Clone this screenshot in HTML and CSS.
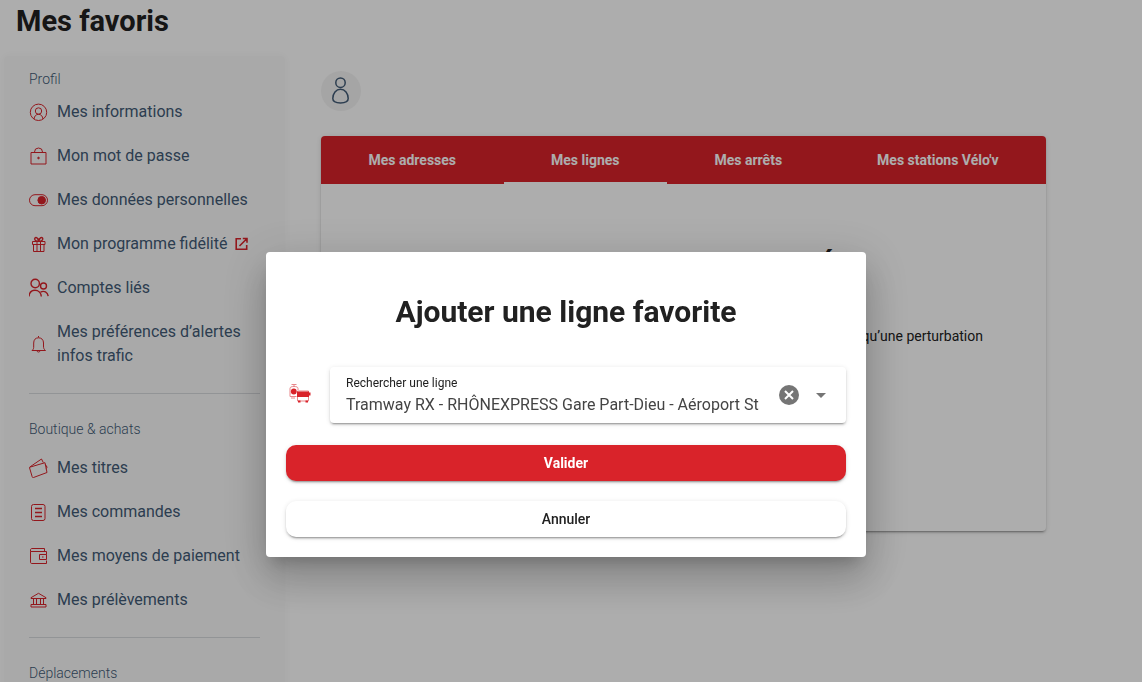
FILE: index.html
```html
<!DOCTYPE html>
<html lang="fr">
<head>
<meta charset="utf-8">
<title>Mes favoris</title>
<link rel="stylesheet" href="styles.css">
</head>
<body>
<div class="page">
  <h1 class="page-title">Mes favoris</h1>
  <div class="layout">
    <nav class="sidebar">
      <section class="group">
        <h2 class="group-label">Profil</h2>
        <a class="item" href="#"><svg class="icon" viewBox="0 0 20 20"><circle cx="9.500" cy="10.300" r="8.200"/><circle cx="9.500" cy="9" r="3.200"/><path d="M5 17c.4-2.900 2-4.700 4.500-4.700s4.100 1.800 4.500 4.700"/></svg><span>Mes informations</span></a>
        <a class="item" href="#"><svg class="icon" viewBox="0 0 20 20"><path d="M2 6.500h15v11.500h-15zM5.500 6.500V6a4 4 0 0 1 8 0v.5"/><circle class="solid" cx="9.500" cy="12" r=".8"/></svg><span>Mon mot de passe</span></a>
        <a class="item" href="#"><svg class="icon" viewBox="0 0 20 20"><rect x=".5" y="4.700" width="18" height="11" rx="5.500"/><circle class="solid" cx="12.700" cy="10.200" r="3.800"/></svg><span>Mes données personnelles</span></a>
        <a class="item" href="#"><svg class="icon" viewBox="0 0 20 20"><path d="M3.500 7.500h12.500v3H3.500zM4.500 10.500h10.500v7H4.500zM8 7.500v10M11.500 7.500v10"/><path class="strong" d="M9.700 7.200C6.500 7.200 4.800 5.500 6 4S9 4.200 9.700 7.200c.7-3 2.700-4.700 3.800-3.200s-.6 3.200-3.800 3.200M7.500 3.500l2.200 2 2.200-2"/></svg><span>Mon programme fidélité</span><svg class="icon icon-external" viewBox="0 0 14 14"><path d="M6 1.800H1.200v10.500h10.500V8M7.800 1.500h4.200v4.300M11.800 1.700 4.500 9"/></svg></a>
        <a class="item" href="#"><svg class="icon icon-strong" viewBox="0 0 20 20"><circle cx="6.200" cy="5.500" r="4.200"/><circle cx="14.500" cy="8" r="3"/><path d="M0 18.500c.3-3.700 2.700-6.200 6-6.200s6 2.500 6.300 6.200M11.500 14.200c3.500-2 7.200 0 7.700 4"/></svg><span>Comptes liés</span></a>
        <a class="item" href="#"><svg class="icon" viewBox="0 0 20 20"><path d="M9.500 2v1.500M3 16.500h13.500c-1.500-1.300-2-2-2-4.500V9c0-3.300-2-5.200-5-5.200S4.700 5.700 4.700 9v3c0 2.500-.2 3.200-1.700 4.500zM8 17c.3 1.400 2.700 1.400 3 0"/></svg><span>Mes préférences d’alertes infos trafic</span></a>
      </section>
      <section class="group">
        <h2 class="group-label">Boutique &amp; achats</h2>
        <a class="item" href="#"><svg class="icon" viewBox="0 0 20 20"><path d="M.8 9.200 16 4.700l2 9.800-13.500 5c-.7.200-1.100 0-1.300-.7L.6 10c-.2-.6 0-.9.500-1.200L12.500 1l1.800 3.600M16.300 6.400l1.900 3-1.400 1.200"/></svg><span>Mes titres</span></a>
        <a class="item" href="#"><svg class="icon" viewBox="0 0 20 20"><rect x="2.500" y="2.500" width="13.500" height="16" rx="2"/><path class="strong" d="M6 6.500h7M6 10.500h7M6 14.500h7"/></svg><span>Mes commandes</span></a>
        <a class="item" href="#"><svg class="icon" viewBox="0 0 20 20"><path d="M17.500 8.500v-3h-16v10.800c0 .7.500 1.200 1.200 1.200h14.800v-3M1.500 5.500v-1.500c0-.9.500-1.500 1.500-1.500h12.500v3M17.500 8.500h-7v5h7zM13 11h1.500"/></svg><span>Mes moyens de paiement</span></a>
        <a class="item" href="#"><svg class="icon" viewBox="0 0 20 20"><path d="M2 7.700 9.500 3.300l7.500 4.400v.8H2zM4.500 8.500v6M7.500 8.500v6M11.500 8.500v6M14.500 8.500v6M2 14.500h15v2.500H2z"/></svg><span>Mes prélèvements</span></a>
      </section>
      <section class="group">
        <h2 class="group-label">Déplacements</h2>
      </section>
    </nav>
    <main class="content">
      <div class="avatar"><svg class="avatar-icon" viewBox="0 0 20 28"><circle cx="9.500" cy="5.700" r="4.700"/><path d="M9.500 12.300c4.500 0 7.700 4.300 7.700 9.300 0 3.200-2.500 4.400-7.700 4.400s-7.700-1.200-7.700-4.400c0-5 3.200-9.300 7.700-9.300z"/></svg></div>
      <div class="card">
        <div class="tabs" role="tablist">
          <button class="tab" role="tab">Mes adresses</button>
          <button class="tab tab-active" role="tab" aria-selected="true">Mes lignes</button>
          <button class="tab" role="tab">Mes arrêts</button>
          <button class="tab" role="tab">Mes stations Vélo'v</button>
        </div>
        <div class="panel">
          <h2 class="panel-title">Mes lignes favorites en Été</h2>
          <p class="panel-text">Ajoutez vos lignes favorites pour être informé directement en temps réel dès qu’une perturbation</p>
        </div>
      </div>
    </main>
  </div>
</div>
<div class="overlay">
  <form class="dialog" role="dialog" aria-labelledby="dialog-title">
    <h2 class="dialog-title" id="dialog-title">Ajouter une ligne favorite</h2>
    <div class="search-row">
      <svg class="transport" viewBox="0 0 24 24"><path class="pale" d="M3.500 1.500h5M6 1.500v2M10 7V5.500C10 4 8.500 3.500 6 3.500S2 4 2 5.500v8h6.500M3 15h4M9.500 8h11v10h-11z"/><circle class="fill" cx="5.800" cy="8.500" r="2.900"/><path class="fill" d="M9 8.500h12V14H9zM21 9.500h1.500v3H21zM10 17.500h2.500v2H10zM17.500 17.500H20v2h-2.500z"/></svg>
      <div class="field">
        <div class="field-text">
          <label class="field-label" for="line">Rechercher une ligne</label>
          <input class="field-input" id="line" type="text" value="Tramway RX - RHÔNEXPRESS Gare Part-Dieu - Aéroport St">
        </div>
        <button class="field-button" type="button" aria-label="Effacer"><svg class="clear" viewBox="0 0 20 20"><circle cx="10" cy="10" r="10"/><path d="m6 6 8 8M14 6l-8 8"/></svg></button>
        <button class="field-button" type="button" aria-label="Ouvrir la liste"><svg class="arrow" viewBox="0 0 10 5"><path d="M0 0h10L5 5z"/></svg></button>
      </div>
    </div>
    <button class="action action-primary" type="button">Valider</button>
    <button class="action" type="button">Annuler</button>
  </form>
</div>
</body>
</html>
```

FILE: styles.css
```css
* {
  box-sizing: border-box;
}

body {
  margin: 0;
  background: #fff;
  color: #212121;
  font-family: Roboto, "Liberation Sans", sans-serif;
  font-size: 16px;
  line-height: 24px;
  height: 100vh;
  overflow: hidden;
}

h1, h2, p {
  margin: 0;
}

button {
  border: 0;
  background: none;
  font: inherit;
  color: inherit;
  padding: 0;
}

.page-title {
  padding: 0 16px;
  font-size: 29px;
  line-height: 42px;
  font-weight: 700;
}

.layout {
  display: flex;
  align-items: flex-start;
  gap: 36px;
  padding: 14px 96px 0 4px;
}

.sidebar {
  flex: 0 0 281px;
  padding: 13px 25px;
  background: #fafafa;
  border-radius: 4px;
  box-shadow: 0 0 8px rgba(0, 0, 0, .03);
  color: #425b76;
}

.group + .group {
  margin-top: 15px;
  padding-top: 25px;
  border-top: 1px solid #d8dade;
}

.group-label {
  font-size: 14px;
  line-height: 20px;
  font-weight: 300;
  margin-bottom: 7px;
}

.group:first-child .group-label {
  margin-bottom: 1px;
}

.item {
  display: flex;
  align-items: center;
  gap: 8px;
  padding: 10px 0;
  color: inherit;
  text-decoration: none;
}

.icon {
  flex: none;
  width: 20px;
  height: 20px;
  fill: none;
  stroke: #d9232a;
  stroke-width: 1;
}

.icon-strong {
  stroke-width: 1.4;
}

.icon .solid {
  fill: #d9232a;
}

.icon .strong {
  stroke-width: 1.4;
}

.icon-external {
  width: 14px;
  height: 14px;
  stroke-width: 1.6;
}

.content {
  flex: 1;
  padding-top: 15px;
}

.avatar {
  display: flex;
  align-items: center;
  justify-content: center;
  width: 40px;
  height: 40px;
  border-radius: 50%;
  background: #f4f4f4;
}

.avatar-icon {
  width: 20px;
  height: 28px;
  fill: none;
  stroke: #425b76;
  stroke-width: 1.5;
}

.card {
  margin-top: 25px;
  border-radius: 4px;
  box-shadow: 0 3px 1px -2px rgba(0, 0, 0, .2), 0 2px 2px rgba(0, 0, 0, .14), 0 1px 5px rgba(0, 0, 0, .12);
}

.tabs {
  display: flex;
  background: #d9232a;
  border-radius: 4px 4px 0 0;
}

.tab {
  flex: 1 1 auto;
  height: 48px;
  border-bottom: 2px solid transparent;
  border-top: 2px solid transparent;
  color: #fff;
  font-size: 14px;
  font-weight: 700;
}

.tab-active {
  border-bottom-color: #fff;
}

.panel {
  padding: 62px 24px 183px;
  text-align: center;
}

.panel-title {
  font-size: 29px;
  line-height: 40px;
}

.panel-text {
  margin-top: 38px;
  font-size: 14px;
}

.overlay {
  position: fixed;
  inset: 0;
  display: flex;
  justify-content: center;
  align-items: flex-start;
  padding: 252px 10px 0 0;
  background: rgba(0, 0, 0, .32);
}

.dialog {
  display: flex;
  flex-direction: column;
  width: 600px;
  max-width: 80vw;
  padding: 40px 20px 20px;
  border-radius: 4px;
  background: #fff;
  box-shadow: 0 11px 15px -7px rgba(0, 0, 0, .2), 0 24px 38px 3px rgba(0, 0, 0, .14), 0 9px 46px 8px rgba(0, 0, 0, .12);
}

.dialog-title {
  font-size: 30px;
  line-height: 40px;
  font-weight: 700;
  text-align: center;
}

.search-row {
  display: flex;
  align-items: center;
  gap: 18px;
  margin: 35px 0 22px;
}

.transport {
  flex: none;
  width: 24px;
  height: 24px;
  margin-left: 2px;
}

.transport .fill {
  fill: #d9232a;
}

.transport .pale {
  fill: none;
  stroke: #e8868a;
}

.field {
  flex: 1;
  display: flex;
  align-items: center;
  height: 56px;
  padding: 0 9px 0 16px;
  border-radius: 4px;
  box-shadow: 0 3px 1px -2px rgba(0, 0, 0, .2), 0 2px 2px rgba(0, 0, 0, .14), 0 1px 5px rgba(0, 0, 0, .12);
}

.field-text {
  flex: 1;
  display: flex;
  flex-direction: column;
  gap: 2px;
  padding-top: 2px;
  margin-right: 6px;
}

.field-label {
  font-size: 12px;
  line-height: 16px;
}

.field-input {
  width: 100%;
  height: 24px;
  padding: 0;
  border: 0;
  outline: 0;
  background: none;
  color: #444;
  font: inherit;
}

.field-button {
  display: flex;
  align-items: center;
  justify-content: center;
  width: 32px;
  height: 32px;
}

.clear {
  width: 20px;
  height: 20px;
  fill: #757575;
}

.clear path {
  stroke: #fff;
  stroke-width: 2;
}

.arrow {
  width: 10px;
  height: 5px;
  fill: #757575;
}

.action {
  height: 36px;
  border-radius: 10px;
  background: #fff;
  font-size: 14px;
  font-weight: 500;
  box-shadow: 0 3px 1px -2px rgba(0, 0, 0, .2), 0 2px 2px rgba(0, 0, 0, .14), 0 1px 5px rgba(0, 0, 0, .12);
}

.action-primary {
  margin-bottom: 20px;
  background: #d9232a;
  color: #fff;
  font-weight: 700;
}
```
